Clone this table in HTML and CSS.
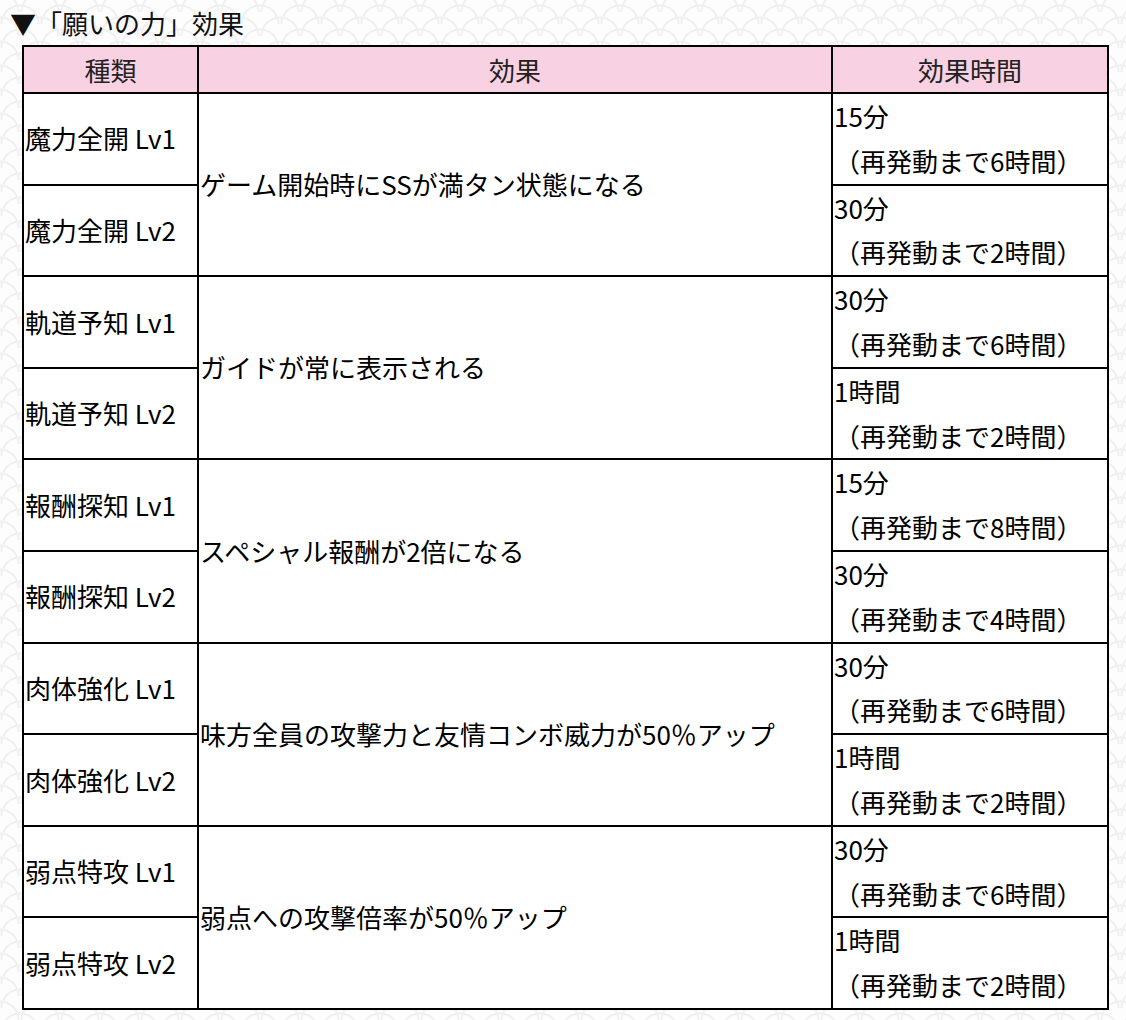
FILE: index.html
```html
<!DOCTYPE html>
<html lang="ja">
<head>
<meta charset="utf-8">
<title>願いの力 効果</title>
<link rel="stylesheet" href="styles.css">
</head>
<body>
<div class="page">
  <div class="title">▼「願いの力」効果</div>
  <table class="effects">
    <colgroup>
      <col class="c-type">
      <col class="c-effect">
      <col class="c-time">
    </colgroup>
    <thead>
      <tr><th>種類</th><th>効果</th><th>効果時間</th></tr>
    </thead>
    <tbody>
      <tr><td>魔力全開 Lv1</td><td rowspan="2">ゲーム開始時にSSが満タン状態になる</td><td>15分<br>（再発動まで6時間）</td></tr>
      <tr><td>魔力全開 Lv2</td><td>30分<br>（再発動まで2時間）</td></tr>
      <tr><td>軌道予知 Lv1</td><td rowspan="2">ガイドが常に表示される</td><td>30分<br>（再発動まで6時間）</td></tr>
      <tr><td>軌道予知 Lv2</td><td>1時間<br>（再発動まで2時間）</td></tr>
      <tr><td>報酬探知 Lv1</td><td rowspan="2">スペシャル報酬が2倍になる</td><td>15分<br>（再発動まで8時間）</td></tr>
      <tr><td>報酬探知 Lv2</td><td>30分<br>（再発動まで4時間）</td></tr>
      <tr><td>肉体強化 Lv1</td><td rowspan="2">味方全員の攻撃力と友情コンボ威力が50％アップ</td><td>30分<br>（再発動まで6時間）</td></tr>
      <tr><td>肉体強化 Lv2</td><td>1時間<br>（再発動まで2時間）</td></tr>
      <tr><td>弱点特攻 Lv1</td><td rowspan="2">弱点への攻撃倍率が50％アップ</td><td>30分<br>（再発動まで6時間）</td></tr>
      <tr><td>弱点特攻 Lv2</td><td>1時間<br>（再発動まで2時間）</td></tr>
    </tbody>
  </table>
</div>
</body>
</html>
```
FILE: styles.css
```css
html, body {
  margin: 0;
  padding: 0;
}
body {
  background-color: #fdfdfd;
  background-image:
    radial-gradient(circle at 50% 100%, transparent 17px, #f0f0f0 18px, #f0f0f0 19px, transparent 20px),
    radial-gradient(circle at 50% 100%, transparent 17px, #f0f0f0 18px, #f0f0f0 19px, transparent 20px);
  background-size: 40px 24px, 40px 24px;
  background-position: 0 0, 20px 12px;
  font-family: "Noto Sans CJK JP", "Noto Sans", sans-serif;
  color: #000;
  width: 1126px;
  height: 1020px;
  overflow: hidden;
}
.page {
  padding: 0 0 0 10px;
}
.title {
  font-size: 26px;
  line-height: 45px;
  height: 45px;
  color: #111;
}
.effects {
  margin-left: 12px;
  width: 1085px;
  border-collapse: collapse;
  border: 2px solid #000;
  background: #fff;
  table-layout: fixed;
  font-size: 26px;
}
.c-type { width: 175px; }
.c-effect { width: 634px; }
.c-time { width: 276px; }
.effects th {
  background: #f8d2e3;
  font-weight: normal;
  text-align: center;
  line-height: 45px;
  padding: 0;
  border: 2px solid #000;
  color: #222;
}
.effects td {
  border: 2px solid #000;
  padding: 0 1px;
  line-height: 44.8px;
  vertical-align: middle;
  text-align: left;
  white-space: nowrap;
}
```
